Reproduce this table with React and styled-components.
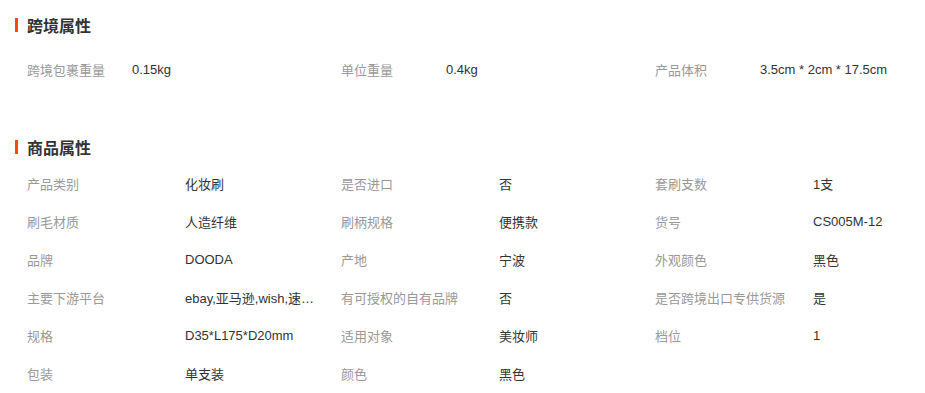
import React from 'react';
import styled, {createGlobalStyle} from "styled-components";

const Global = createGlobalStyle`
  body {
    margin: 0;
    background: #fff;
    font-family: "Liberation Sans", "Noto Sans CJK SC", sans-serif;
  }
`;

const Page = styled.div`
  width: 925px;
  padding: 8px 0 0 15px;
  box-sizing: border-box;
`;

const Section = styled.div`
  margin-bottom: ${p => p.gap || 0}px;
`;

const Title = styled.h3`
  margin: 0;
  height: 34px;
  display: flex;
  align-items: center;
  font-size: 16px;
  font-weight: bold;
  color: #333;
  &::before {
    content: "";
    width: 3px;
    height: 14px;
    background: #ff4a00;
    margin-right: 9px;
  }
`;

const Grid = styled.div`
  display: grid;
  grid-template-columns: repeat(3, 314px);
  padding: ${p => p.top || 0}px 0 0 12px;
`;

const Cell = styled.div`
  display: flex;
  height: 38px;
  align-items: center;
  font-size: 13px;
`;

const Label = styled.span`
  width: ${p => p.w}px;
  flex-shrink: 0;
  color: #999;
`;

const Value = styled.span`
  color: #333;
  max-width: ${p => p.max ? p.max + "px" : "none"};
  white-space: nowrap;
  overflow: hidden;
  text-overflow: ellipsis;
`;

const cross = [
    ["跨境包裹重量", "0.15kg"],
    ["单位重量", "0.4kg"],
    ["产品体积", "3.5cm * 2cm * 17.5cm"],
];

const goods = [
    ["产品类别", "化妆刷"], ["是否进口", "否"], ["套刷支数", "1支"],
    ["刷毛材质", "人造纤维"], ["刷柄规格", "便携款"], ["货号", "CS005M-12"],
    ["品牌", "DOODA"], ["产地", "宁波"], ["外观颜色", "黑色"],
    ["主要下游平台", "ebay,亚马逊,wish,速卖通,独立站"], ["有可授权的自有品牌", "否"], ["是否跨境出口专供货源", "是"],
    ["规格", "D35*L175*D20mm"], ["适用对象", "美妆师"], ["档位", "1"],
    ["包装", "单支装"], ["颜色", "黑色"],
];

const App = () => {
    return (
        <Page>
            <Global/>
            <Section gap={42}>
                <Title>跨境属性</Title>
                <Grid top={8}>
                    {cross.map(([k, v]) => (
                        <Cell key={k}>
                            <Label w={105}>{k}</Label>
                            <Value>{v}</Value>
                        </Cell>
                    ))}
                </Grid>
            </Section>
            <Section>
                <Title>商品属性</Title>
                <Grid>
                    {goods.map(([k, v]) => (
                        <Cell key={k}>
                            <Label w={158}>{k}</Label>
                            <Value max={140}>{v}</Value>
                        </Cell>
                    ))}
                </Grid>
            </Section>
        </Page>
    );
};

export default App;
